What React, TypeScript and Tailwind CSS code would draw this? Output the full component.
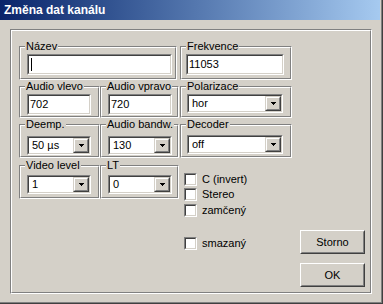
import type { ReactNode } from "react";

// classic win2k-ish dialog
const Group = (props: { label: string; className: string; children?: ReactNode }) => {
    return (
        <div className={`relative border border-t-[#808080] border-l-[#808080] border-b-white border-r-white ${props.className}`}>
            <div className="h-full border border-t-white border-l-white border-b-[#808080] border-r-[#808080]">
                {props.children}
            </div>
            <span className="absolute left-[5px] top-[-7px] bg-[#d4d0c8] px-px leading-[13px] whitespace-nowrap">{props.label}</span>
        </div>
    );
};

const Sunken = (props: { className: string; children?: ReactNode }) => {
    return (
        <div className={`border border-t-[#808080] border-l-[#808080] border-b-white border-r-white ${props.className}`}>
            <div className="h-full border border-t-[#404040] border-l-[#404040] border-b-[#d4d0c8] border-r-[#d4d0c8] bg-white flex items-center">
                {props.children}
            </div>
        </div>
    );
};

const Edit = (props: { value?: string; className: string; caret?: boolean }) => {
    return (
        <Sunken className={`h-[21px] ${props.className}`}>
            {props.caret && <span className="ml-[2px] w-px h-[13px] bg-black"></span>}
            <span className="pl-px leading-[13px]">{props.value}</span>
        </Sunken>
    );
};

const Combo = (props: { value: string; className: string }) => {
    return (
        <Sunken className={`h-[19px] ${props.className}`}>
            <span className="flex-1 pl-[3px] leading-[13px]">{props.value}</span>
            <div className="w-[16px] h-full border border-t-[#d4d0c8] border-l-[#d4d0c8] border-b-[#404040] border-r-[#404040]">
                <div className="h-full border border-t-white border-l-white border-b-[#808080] border-r-[#808080] bg-[#d4d0c8] flex items-center justify-center">
                    <svg width="5" height="3" shapeRendering="crispEdges">
                        <rect x="0" y="0" width="5" height="1" fill="#000" />
                        <rect x="1" y="1" width="3" height="1" fill="#000" />
                        <rect x="2" y="2" width="1" height="1" fill="#000" />
                    </svg>
                </div>
            </div>
        </Sunken>
    );
};

const Check = (props: { label: string; className?: string }) => {
    return (
        <div className={`flex items-center h-[13px] ${props.className || ""}`}>
            <div className="w-[13px] h-[13px] border border-t-[#808080] border-l-[#808080] border-b-white border-r-white">
                <div className="h-full border border-t-[#404040] border-l-[#404040] border-b-[#d4d0c8] border-r-[#d4d0c8] bg-white"></div>
            </div>
            <span className="ml-[5px] leading-[13px]">{props.label}</span>
        </div>
    );
};

const Button = (props: { label: string; className?: string }) => {
    return (
        <div className={`w-[65px] h-[24px] border border-t-white border-l-white border-b-[#404040] border-r-[#404040] ${props.className || ""}`}>
            <div className="h-full border border-t-[#d4d0c8] border-l-[#d4d0c8] border-b-[#808080] border-r-[#808080] flex items-center justify-center leading-[13px]">
                {props.label}
            </div>
        </div>
    );
};

export default function App() {
    return (
        <div className="w-[383px] h-[304px] border-r border-b border-r-[#404040] border-b-[#404040] font-['Liberation_Sans',Arial,sans-serif] text-[11px] text-black">
            <div className="h-full border-r border-b border-r-[#808080] border-b-[#808080] bg-[#d4d0c8] flex flex-col">
                <div className="h-[20px] w-[380px] bg-linear-to-r from-[#0a246a] to-[#a6caf0] flex items-center pl-[4px]">
                    <span className="text-white font-bold text-[12px] leading-[14px]">Změna dat kanálu</span>
                </div>

                <div className="mt-[9px] ml-[10px] w-[362px] h-[265px] border border-t-[#808080] border-l-[#808080] border-b-white border-r-white">
                    <div className="h-full border border-t-white border-l-white border-b-[#808080] border-r-[#808080] pl-[7px] pt-[15px]">
                        <div className="flex">
                            <Group label="Název" className="w-[158px] h-[34px]">
                                <div className="pl-[6px] pt-[6px]">
                                    <Edit className="w-[145px]" caret />
                                </div>
                            </Group>
                            <Group label="Frekvence" className="ml-[3px] w-[112px] h-[34px]">
                                <div className="pl-[4px] pt-[6px]">
                                    <Edit className="w-[98px]" value="11053" />
                                </div>
                            </Group>
                        </div>

                        <div className="flex mt-[6px]">
                            <Group label="Audio vlevo" className="w-[81px] h-[32px]">
                                <div className="pl-[6px] pt-[6px]">
                                    <Edit className="w-[64px]" value="702" />
                                </div>
                            </Group>
                            <Group label="Audio vpravo" className="w-[79px] h-[32px]">
                                <div className="pl-[6px] pt-[6px]">
                                    <Edit className="w-[64px]" value="720" />
                                </div>
                            </Group>
                            <Group label="Polarizace" className="ml-px w-[112px] h-[32px]">
                                <div className="pl-[5px] pt-[6px]">
                                    <Combo className="w-[96px]" value="hor" />
                                </div>
                            </Group>
                        </div>

                        <div className="flex mt-[6px]">
                            <Group label="Deemp." className="w-[81px] h-[34px]">
                                <div className="pl-[6px] pt-[10px]">
                                    <Combo className="w-[64px]" value="50 µs" />
                                </div>
                            </Group>
                            <Group label="Audio bandw." className="w-[79px] h-[34px]">
                                <div className="pl-[6px] pt-[10px]">
                                    <Combo className="w-[64px]" value="130" />
                                </div>
                            </Group>
                            <Group label="Decoder" className="ml-px w-[112px] h-[34px]">
                                <div className="pl-[5px] pt-[9px]">
                                    <Combo className="w-[96px]" value="off" />
                                </div>
                            </Group>
                        </div>

                        <div className="flex mt-[7px]">
                            <div className="flex self-start">
                                <Group label="Video level" className="w-[81px] h-[34px]">
                                    <div className="pl-[6px] pt-[8px]">
                                        <Combo className="w-[64px]" value="1" />
                                    </div>
                                </Group>
                                <Group label="LT" className="w-[79px] h-[34px]">
                                    <div className="pl-[6px] pt-[8px]">
                                        <Combo className="w-[64px]" value="0" />
                                    </div>
                                </Group>
                            </div>
                            <div className="ml-[5px] w-[116px] mt-[8px] flex flex-col">
                                <Check label="C (invert)" />
                                <Check label="Stereo" className="mt-[2px]" />
                                <Check label="zamčený" className="mt-[3px]" />
                                <Check label="smazaný" className="mt-[20px]" />
                            </div>
                            <div className="mt-[65px] flex flex-col">
                                <Button label="Storno" />
                                <Button label="OK" className="mt-[9px]" />
                            </div>
                        </div>
                    </div>
                </div>
            </div>
        </div>
    );
}
